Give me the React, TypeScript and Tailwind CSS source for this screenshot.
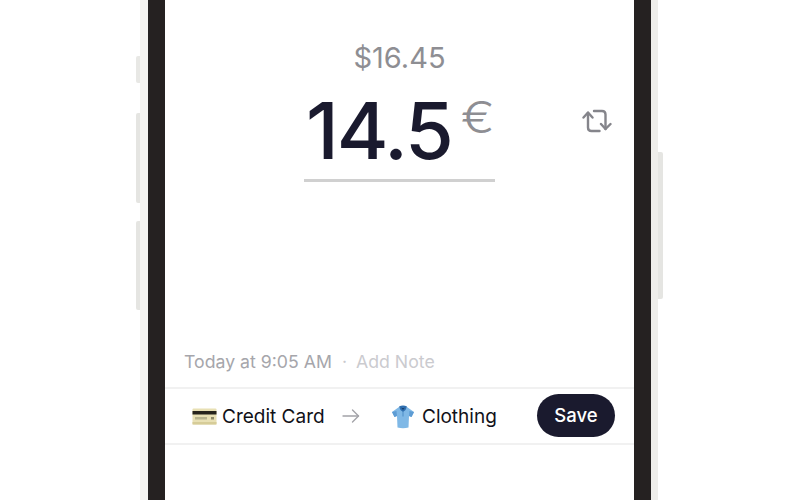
import React from 'react';

const CardEmoji = () => (
  <svg width="25" height="17" viewBox="0 0 25 17" className="shrink-0">
    <rect x="0.5" y="0.5" width="24" height="16" rx="1" fill="#e8e0b4" />
    <rect x="0.5" y="3" width="24" height="3.5" fill="#26241c" />
    <rect x="3" y="9" width="12" height="2.5" fill="#b8b48e" />
    <rect x="19" y="9" width="3" height="2.5" fill="#8f8a68" />
    <rect x="0.5" y="14" width="24" height="2.5" fill="#d6cc98" />
  </svg>
);

const ShirtEmoji = () => (
  <svg width="24" height="24" viewBox="0 0 24 24" className="shrink-0">
    <path d="M8 2 L1 7 L3.5 12 L6 11 L6.5 22.5 Q12 24 17.5 22.5 L18 11 L20.5 12 L23 7 L16 2 Q12 5 8 2 Z" fill="#7fb8e6" />
    <path d="M1 7 L3.5 12 L6 11 L5.5 6 Z M23 7 L20.5 12 L18 11 L18.5 6 Z" fill="#5d9cd4" />
    <path d="M8 1.5 Q12 -0.5 16 1.5 L14.5 5 L12 7 L9.5 5 Z" fill="#2f6fb0" />
    <path d="M10 2.5 Q12 3.5 14 2.5 L12 5 Z" fill="#173f6e" />
    <rect x="11.5" y="6.5" width="1" height="5" fill="#4d8cc6" />
  </svg>
);

const SwapIcon = () => (
  <svg width="30" height="25" viewBox="0 0 30 25" fill="none" stroke="#85858b" strokeWidth="2.4" strokeLinecap="round" strokeLinejoin="round" className="block">
    <path d="M1.5 8.5 L6 3.5 L10.5 8.5" />
    <path d="M6 4 V18.5 Q6 22 9.5 22 H17.5" />
    <path d="M12 2 H20 Q23.5 2 23.5 5.5 V20" />
    <path d="M19 15 L23.5 20 L28.5 15" />
  </svg>
);

const ArrowIcon = () => (
  <svg width="18" height="14" viewBox="0 0 18 14" fill="none" stroke="#a3a3a8" strokeWidth="1.4" strokeLinecap="round" strokeLinejoin="round" className="block">
    <path d="M1 7 H16.5" />
    <path d="M10.5 1 L16.5 7 L10.5 13" />
  </svg>
);

export default function App() {
  return (
    <div className="w-[800px] h-[500px] bg-white flex overflow-hidden font-['Inter',sans-serif]">
      {/* left side buttons */}
      <div className="ml-[136px] w-[4px] flex flex-col shrink-0">
        <div className="mt-[56px] h-[27px] bg-[#e8e8e5] rounded-l-[2px]"></div>
        <div className="mt-[30px] h-[90px] bg-[#e5e5e2] rounded-l-[2px]"></div>
        <div className="mt-[18px] h-[89px] bg-[#e5e5e2] rounded-l-[2px]"></div>
      </div>

      {/* phone body */}
      <div className="w-[8px] bg-[#f4f3f0] shrink-0"></div>
      <div className="w-[17px] bg-[#252121] shrink-0"></div>

      {/* screen */}
      <div className="w-[469px] shrink-0 flex flex-col bg-white">
        <div className="mt-[41px] h-[34px] flex items-center justify-center text-[29px] leading-[34px] text-[#8e8e93]">
          $16.45
        </div>

        <div className="mt-[15px] grid grid-cols-[139px_191px_139px]">
          <div></div>
          <div className="h-[92px] border-b-[3px] border-[#d0d0d0] flex pl-[2px]">
            <span className="text-[79px] leading-[80px] font-[450] text-[#1a1a2e] tracking-[-2px]">14.5</span>
            <span className="ml-[11px] text-[44px] leading-[54px] font-light text-[#8e8e93] scale-x-[1.15]">€</span>
          </div>
          <div className="flex justify-end pr-[22px] pt-[19px]">
            <SwapIcon />
          </div>
        </div>

        <div className="mt-[168px] pl-[19px] h-[24px] flex items-center text-[17.7px] leading-[24px]">
          <span className="text-[#a6a6ab]">Today at 9:05 AM</span>
          <span className="ml-[10px] text-[#c9c9cd]">·</span>
          <span className="ml-[9px] text-[#cbcbcf]">Add Note</span>
        </div>

        <div className="mt-[13px] h-[58px] border-y-[2px] border-[#f1f1f1] flex items-center pl-[27px] text-[19px] text-[#111118]">
          <CardEmoji />
          <span className="ml-[5px] w-[102px] pt-[2px] whitespace-nowrap">Credit Card</span>
          <div className="ml-[18px]"><ArrowIcon /></div>
          <div className="ml-[31px] pt-[2px]"><ShirtEmoji /></div>
          <span className="ml-[7px] w-[75px] pt-[2px] whitespace-nowrap">Clothing</span>
          <button className="ml-[40px] mb-[1px] w-[78px] h-[43px] rounded-full bg-[#1a1a2e] text-white font-[550] text-[18.5px] flex items-center justify-center">
            Save
          </button>
        </div>
      </div>

      <div className="w-[17px] bg-[#252121] shrink-0"></div>
      <div className="w-[7px] bg-[#eeedea] shrink-0"></div>

      {/* right side button */}
      <div className="w-[5px] shrink-0">
        <div className="mt-[152px] h-[147px] bg-[#e5e5e2] rounded-r-[2px]"></div>
      </div>
    </div>
  );
}
